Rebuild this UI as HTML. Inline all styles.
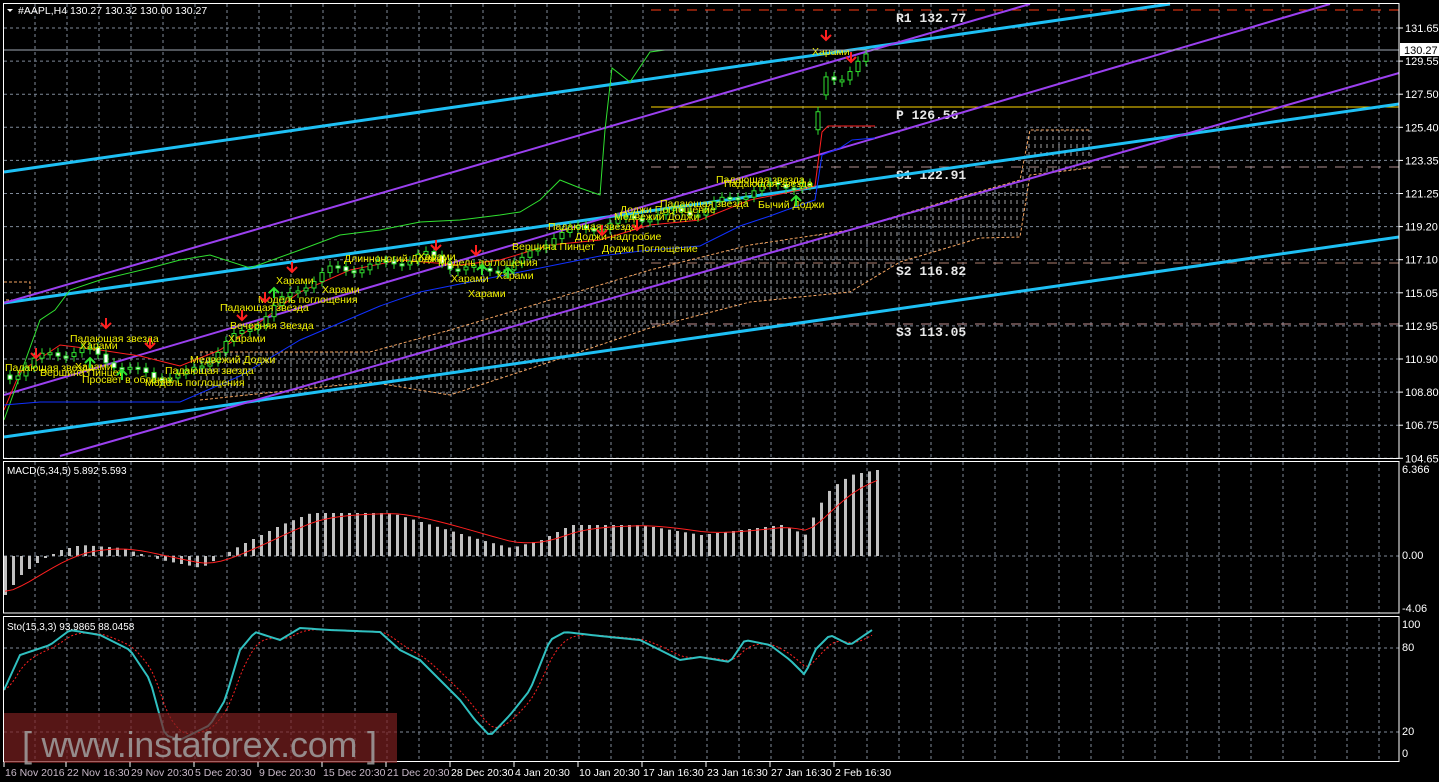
<!DOCTYPE html>
<html><head><meta charset="utf-8"><style>
html,body{margin:0;padding:0;background:#000;width:1439px;height:782px;overflow:hidden}
svg{display:block}
text{font-family:"Liberation Sans","DejaVu Sans",sans-serif}
</style></head><body>
<svg id="s" width="1439" height="782" xmlns="http://www.w3.org/2000/svg">
<defs>
<pattern id="hat" width="6" height="8" patternUnits="userSpaceOnUse"><line x1="3" y1="0" x2="3" y2="4" stroke="#d8d8d8" stroke-width="1"/></pattern>
</defs>
<rect width="1439" height="782" fill="#000"/>
<g id="g"></g>
</svg>
<script>
(function(){
var NS="http://www.w3.org/2000/svg",G=document.getElementById('g');
function el(t,a,txt){var e=document.createElementNS(NS,t);for(var k in a)e.setAttribute(k,a[k]);if(txt!==undefined)e.textContent=txt;G.appendChild(e);return e;}
function interp(pts,x){if(x<=pts[0][0])return pts[0][1];for(var i=0;i<pts.length-1;i++){if(x>=pts[i][0]&&x<=pts[i+1][0]){var t=(x-pts[i][0])/(pts[i+1][0]-pts[i][0]||1);return pts[i][1]+t*(pts[i+1][1]-pts[i][1]);}}return pts[pts.length-1][1];}
function pl(pts,c,w,extra){var a={points:pts.map(function(p){return p.join(',')}).join(' '),fill:'none',stroke:c,'stroke-width':w};for(var k in extra)a[k]=extra[k];return el('polyline',a);}
var R=1399,x,y,i;
for(x=35;x<R;x+=32){el('line',{x1:x,y1:4,x2:x,y2:458,stroke:'#7f8a99','stroke-dasharray':'3 3','stroke-width':1});el('line',{x1:x,y1:462,x2:x,y2:613,stroke:'#7f8a99','stroke-dasharray':'3 3'});el('line',{x1:x,y1:618,x2:x,y2:761,stroke:'#7f8a99','stroke-dasharray':'3 3'});}
var prices=["131.65","129.55","127.50","125.40","123.35","121.25","119.20","117.10","115.05","112.95","110.90","108.80","106.75","104.65"];
for(i=0;i<14;i++){y=28+i*33.1;el('line',{x1:4,y1:y,x2:R,y2:y,stroke:'#7f8a99','stroke-dasharray':'3 3'});el('line',{x1:R,y1:y,x2:R+4,y2:y,stroke:'#fff'});el('text',{x:1405,y:y+4,fill:'#fff','font-size':11},prices[i]);}
el('line',{x1:4,y1:556,x2:R,y2:556,stroke:'#7f8a99','stroke-dasharray':'3 3'});
el('line',{x1:4,y1:648,x2:R,y2:648,stroke:'#7f8a99','stroke-dasharray':'3 3'});
el('line',{x1:4,y1:732,x2:R,y2:732,stroke:'#7f8a99','stroke-dasharray':'3 3'});
[[473,'6.366'],[559,'0.00'],[612,'-4.06'],[628,'100'],[651,'80'],[735,'20'],[757,'0']].forEach(function(a){el('text',{x:1402,y:a[0],fill:'#fff','font-size':11},a[1]);});
el('line',{x1:651,y1:10,x2:R,y2:10,stroke:'#ff3c14','stroke-dasharray':'10 8','stroke-width':1});
el('line',{x1:651,y1:107,x2:R,y2:107,stroke:'#ffd700','stroke-width':1});
el('line',{x1:651,y1:167,x2:R,y2:167,stroke:'#b09090','stroke-dasharray':'10 8'});
el('line',{x1:651,y1:263,x2:R,y2:263,stroke:'#b08070','stroke-dasharray':'10 8'});
el('line',{x1:651,y1:324,x2:R,y2:324,stroke:'#c09090','stroke-dasharray':'10 8'});
[[22,'R1 132.77'],[119,'P 126.56'],[179,'S1 122.91'],[275,'S2 116.82'],[336,'S3 113.05']].forEach(function(a){el('text',{x:896,y:a[0],fill:'#e8e8e8','font-size':13,'font-weight':'bold',style:'font-family:"Liberation Mono",monospace'},a[1]);});
var up=[[200,352],[370,352],[450,330],[550,300],[650,270],[750,245],[850,230],[950,200],[1020,180],[1030,130],[1090,130]];
var lo=[[200,400],[370,382],[450,395],[550,362],[650,328],[750,302],[850,292],[900,262],[980,238],[1020,237],[1030,175],[1090,168]];
var poly=up.concat(lo.slice().reverse()).map(function(p){return p.join(',')}).join(' ');
el('polygon',{points:poly,fill:'url(#hat)',opacity:0.75});
pl(up,'#f4a460',1,{'stroke-dasharray':'3 2'});pl(lo,'#f4a460',1,{'stroke-dasharray':'3 2'});
el('polyline',{points:'4,282 30,282 30,300 4,300',fill:'none',stroke:'#f4a460','stroke-dasharray':'3 2'});
el('line',{x1:4,y1:172,x2:1170,y2:4,stroke:'#1ec0f5','stroke-width':3});
el('line',{x1:4,y1:303,x2:R,y2:104,stroke:'#1ec0f5','stroke-width':3});
el('line',{x1:4,y1:437,x2:R,y2:237,stroke:'#1ec0f5','stroke-width':3});
el('line',{x1:4,y1:303,x2:1030,y2:4,stroke:'#9b40f0','stroke-width':2});
el('line',{x1:4,y1:395,x2:1330,y2:4,stroke:'#9b40f0','stroke-width':2});
el('line',{x1:60,y1:456,x2:R,y2:73,stroke:'#9b40f0','stroke-width':2});
pl([[4,420],[40,320],[55,310],[70,290],[100,280],[150,268],[180,260],[210,255],[250,268],[300,250],[340,235],[380,230],[420,222],[460,220],[500,215],[520,212],[540,200],[560,180],[580,188],[600,195],[605,130],[612,68],[630,82],[650,52],[665,50]],'#30e030',1);
pl([[4,410],[20,372],[60,345],[100,350],[140,356],[180,366],[220,350],[260,322],[300,292],[350,270],[400,260],[460,265],[500,260],[550,245],[600,240],[650,225],[700,220],[750,200],[800,190],[815,186],[822,132],[828,126],[875,126]],'#ff2020',1);
pl([[4,405],[40,402],[180,402],[240,376],[300,340],[380,306],[420,292],[470,282],[520,272],[600,256],[650,250],[700,246],[740,226],[770,216],[800,205],[815,200],[822,155],[840,148],[852,140],[875,138]],'#1030ff',1);
var cl=[[10,375],[50,352],[90,352],[130,372],[180,378],[230,340],[270,310],[300,285],[330,270],[380,265],[420,255],[450,265],[480,272],[520,262],[550,235],[600,225],[650,215],[700,210],[750,190],[800,182],[812,190],[818,80],[840,75],[870,55]];
var prev=interp(cl,4);
for(x=8;x<=870;x+=8){var c=interp(cl,x)+Math.sin(x*1.7)*5;var o=prev;prev=c;if(Math.abs(o-c)>20)o=c+(o>c?18:-18);var ty=Math.min(o,c),h=Math.max(2,Math.abs(o-c));
el('line',{x1:x+2,y1:ty-5,x2:x+2,y2:ty+h+5,stroke:'#30e030'});
el('rect',{x:x,y:ty,width:4,height:h,fill:(c<o?'#000':'#fff'),stroke:'#30e030','stroke-width':1});}
var lbl=[[5,371,'Падающая звезда'],[40,376,'Вершина Пинцет'],[70,342,'Падающая звезда'],[80,349,'Харами'],[75,370,'Харами'],[82,383,'Просвет в облаках'],[145,386,'Модель поглощения'],[165,374,'Падающая звезда'],[190,363,'Медвежий Доджи'],[228,342,'Харами'],[230,329,'Вечерняя Звезда'],[220,311,'Падающая звезда'],[258,303,'Модель поглощения'],[276,284,'Харами'],[322,293,'Харами'],[344,262,'Длинноногий Доджи'],[418,260,'Харами'],[438,266,'Модель поглощения'],[451,282,'Харами'],[496,279,'Харами'],[468,297,'Харами'],[512,250,'Вершина Пинцет'],[548,230,'Падающая звезда'],[575,240,'Доджи-надгробие'],[602,252,'Доджи Поглощение'],[614,220,'Медвежий Доджи'],[620,213,'Доджи Поглощение'],[660,207,'Падающая звезда'],[716,183,'Падающая звезда'],[724,187,'Падающая звезда'],[758,208,'Бычий Доджи'],[812,55,'Харами']];
lbl.forEach(function(a){el('text',{x:a[0],y:a[1],fill:'#f0f000','font-size':10.5},a[2]);});
[[36,358,1],[106,328,1],[150,348,1],[242,320,1],[265,302,1],[292,272,1],[436,250,1],[476,255,1],[602,235,1],[637,230,1],[826,40,1],[851,62,1],[90,358,0],[122,370,0],[274,288,0],[482,265,0],[508,268,0],[796,196,0]].forEach(function(a){var x=a[0],y=a[1];if(a[2]){el('path',{d:'M'+x+' '+(y-10)+'V'+y+'M'+(x-5)+' '+(y-5)+'L'+x+' '+y+'L'+(x+5)+' '+(y-5),stroke:'#ff2020','stroke-width':2,fill:'none'});}else{el('path',{d:'M'+x+' '+(y+10)+'V'+y+'M'+(x-5)+' '+(y+5)+'L'+x+' '+y+'L'+(x+5)+' '+(y+5),stroke:'#30e030','stroke-width':2,fill:'none'});}});
el('line',{x1:4,y1:50,x2:R,y2:50,stroke:'#a0a8b4'});
el('rect',{x:1400,y:43,width:39,height:13,fill:'#fff'});
el('text',{x:1404,y:54,fill:'#000','font-size':11},'130.27');
el('path',{d:'M7 9L13 9L10 12Z',fill:'#fff'});
el('text',{x:18,y:14,fill:'#fff','font-size':10.5},'#AAPL,H4  130.27 130.32 130.00 130.27');
var mh=[[4,595],[20,575],[40,560],[60,550],[80,545],[120,548],[160,560],[200,568],[240,545],[280,525],[310,513],[390,513],[430,525],[480,540],[510,548],[540,540],[570,525],[640,525],[700,535],[740,530],[780,525],[805,535],[815,510],[830,488],[850,475],[875,470]];
var sig=[];var s=590,v;
for(x=4;x<=876;x+=8){v=interp(mh,x);el('rect',{x:x,y:Math.min(v,556),width:3,height:Math.abs(556-v),fill:'#c0c0c0'});s=s+(v-s)*0.25;sig.push([x+1,s]);}
pl(sig,'#ff2020',1);
el('text',{x:7,y:474,fill:'#fff','font-size':10},'MACD(5,34,5) 5.892 5.593');
var st=[[4,690],[20,655],[50,645],[70,630],[100,635],[130,650],[150,680],[165,735],[180,740],[210,725],[225,700],[240,650],[255,632],[280,640],[300,628],[330,630],[380,632],[400,650],[420,660],[440,680],[460,700],[475,720],[490,736],[510,715],[530,690],[550,640],[565,632],[600,636],[640,640],[680,660],[700,657],[730,662],[745,640],[770,645],[790,660],[805,675],[815,650],[830,635],[850,645],[875,628]];
var sp=[],ss=[],q=690;for(x=4;x<=875;x+=4){v=interp(st,x);sp.push([x,v]);q=q+(v-q)*0.3;ss.push([x,q]);}
pl(ss,'#ff2020',1,{'stroke-dasharray':'2 2'});pl(sp,'#30c0c0',2);
el('text',{x:7,y:630,fill:'#fff','font-size':10},'Sto(15,3,3) 93.9865 88.0458');
el('rect',{x:3.5,y:3.5,width:1395.5,height:455,fill:'none',stroke:'#fff'});
el('rect',{x:3.5,y:461.5,width:1395.5,height:151.5,fill:'none',stroke:'#fff'});
el('rect',{x:3.5,y:616.5,width:1395.5,height:145,fill:'none',stroke:'#fff'});
el('rect',{x:4,y:713,width:393,height:50,fill:'#7a2020','fill-opacity':0.7});
el('text',{x:22,y:757,fill:'#a0a0a0','font-size':36,'fill-opacity':0.85,textLength:355},'[ www.instaforex.com ]');
var tl=[[5,'16 Nov 2016'],[67,'22 Nov 16:30'],[131,'29 Nov 20:30'],[195,'5 Dec 20:30'],[259,'9 Dec 20:30'],[323,'15 Dec 20:30'],[387,'21 Dec 20:30'],[451,'28 Dec 20:30'],[515,'4 Jan 20:30'],[579,'10 Jan 20:30'],[643,'17 Jan 16:30'],[707,'23 Jan 16:30'],[771,'27 Jan 16:30'],[835,'2 Feb 16:30']];
tl.forEach(function(a){el('line',{x1:a[0]-1,y1:762,x2:a[0]-1,y2:767,stroke:'#fff'});el('text',{x:a[0],y:776,fill:(a[0]<390?'#c8b8c8':'#fff'),'font-size':10.5},a[1]);});
})();
</script>
</body></html>
